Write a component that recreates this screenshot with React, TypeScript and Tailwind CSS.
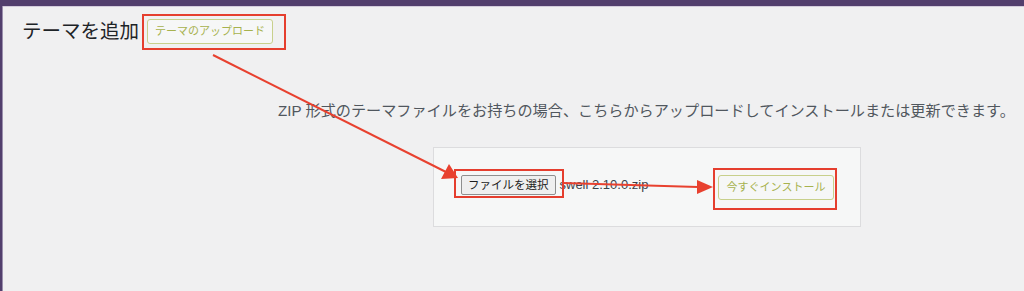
const jp = "font-['Liberation_Sans','Noto_Sans_CJK_JP',sans-serif]";

function Arrows() {
  // annotation overlay: arrows drawn over the page
  return (
    <svg className="absolute inset-0 pointer-events-none" width={1024} height={291}>
      <line x1={213} y1={55} x2={446} y2={172} stroke="#e8412f" strokeWidth={2} />
      <polygon points="458,178 441,179 449,164" fill="#e8412f" />
      <line x1={563} y1={183} x2={698} y2={187} stroke="#e8412f" strokeWidth={2} />
      <polygon points="713,187 697,180 697,194" fill="#e8412f" />
    </svg>
  );
}

export default function App() {
  return (
    <div className={`relative w-[1024px] h-[291px] overflow-hidden bg-[#f0f0f1] ${jp}`}>
      <div className="h-[6px] bg-[#523f6d]" />
      <div className="flex h-[285px]">
        <div className="w-[2px] bg-[#523f6d]" />
        <div className="w-[1px] bg-[#9b8fad]" />
        <div className="flex-1 border-t border-[#d3ccdc] pl-[19px] pt-[12px]">
          <div className="flex items-center gap-[8px]">
            <h1 className="text-[19.5px] leading-[25px] text-[#1d2327] font-normal">テーマを追加</h1>
            <button className="h-[25px] px-[7px] rounded-[3px] border border-[#c8d08c] bg-[#f6f7f7] text-[11px] text-[#a7b24e]">
              テーマのアップロード
            </button>
          </div>

          <p className="mt-[57px] ml-[256px] text-[15.15px] leading-[20px] text-[#50575e] whitespace-nowrap">
            ZIP 形式のテーマファイルをお持ちの場合、こちらからアップロードしてインストールまたは更新できます。
          </p>

          <div className="mt-[26px] ml-[411px] w-[428px] h-[80px] border border-[#dcdcde] bg-[#f6f7f7] pl-[27px] pr-[26px] pt-[27px] flex items-start justify-between">
            <div className="flex items-center gap-[4px]">
              <button className="h-[20px] px-[6px] rounded-[2px] border border-[#8f8f8f] bg-[#efefef] text-[11.5px] leading-[18px] text-[#1d1d1d]">
                ファイルを選択
              </button>
              <span className="text-[13px] leading-[20px] text-[#3c434a]">swell 2.10.0.zip</span>
            </div>
            <button className="h-[25px] w-[116px] rounded-[3px] border border-[#c8d08c] bg-[#f6f7f7] text-[11px] text-[#a7b24e]">
              今すぐインストール
            </button>
          </div>
        </div>
      </div>

      <div className="absolute left-[142px] top-[14px] w-[144px] h-[36px] border-2 border-[#e53e2e]" />
      <div className="absolute left-[454px] top-[169px] w-[110px] h-[29px] border-2 border-[#e53e2e]" />
      <div className="absolute left-[713px] top-[168px] w-[124px] h-[42px] border-2 border-[#e53e2e]" />
      <Arrows />
    </div>
  );
}
